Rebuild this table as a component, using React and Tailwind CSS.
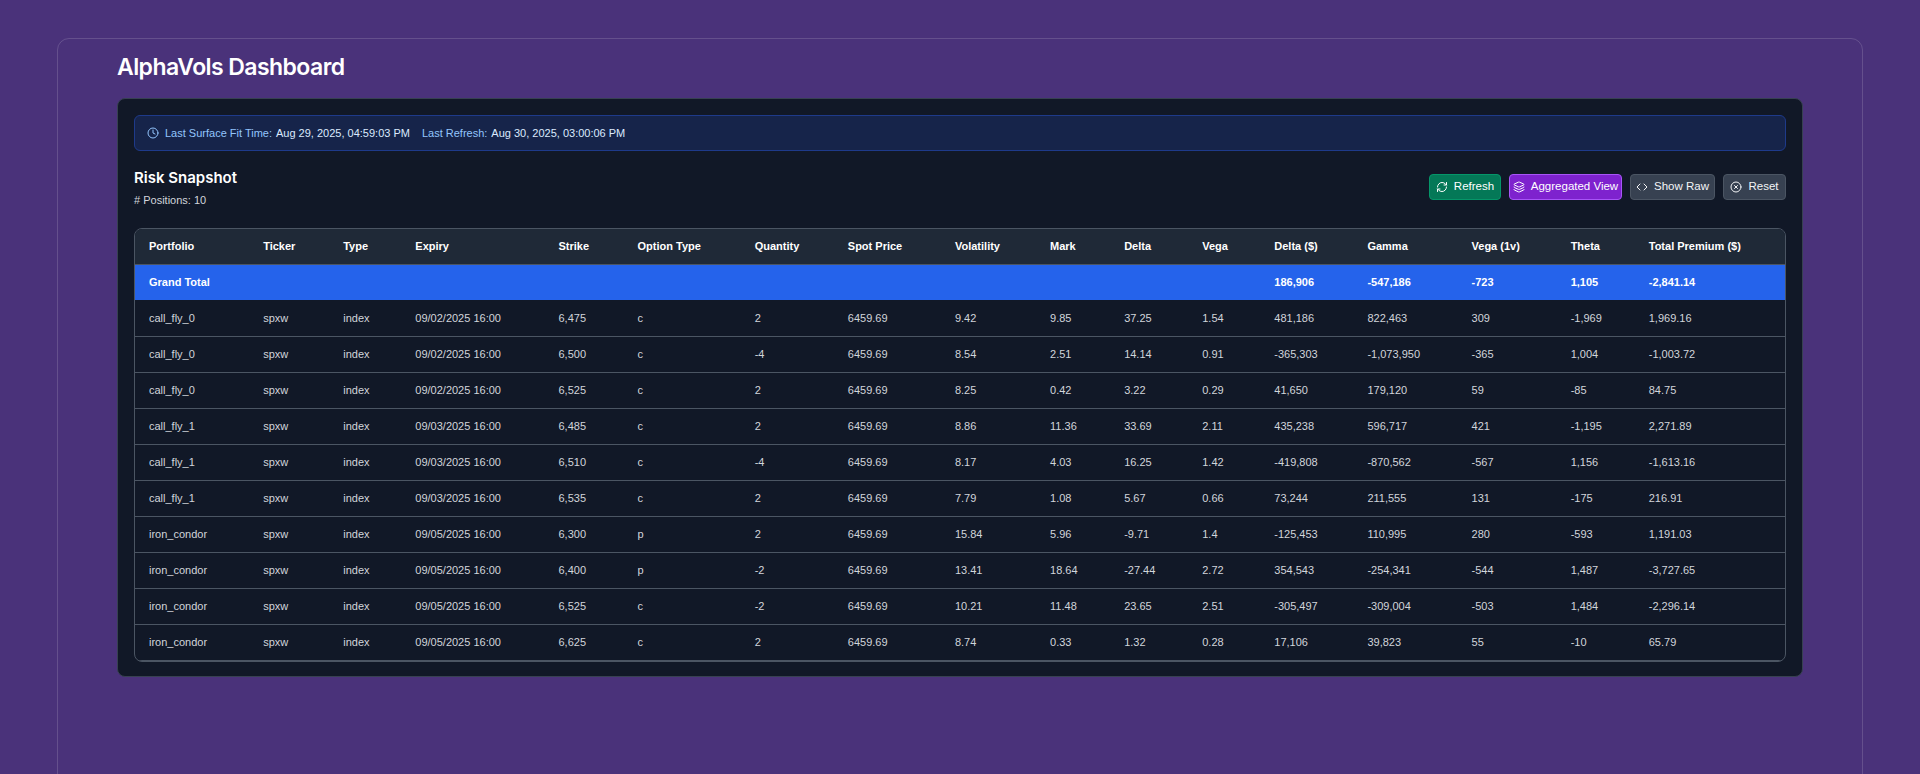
import React from 'react';
import { Clock, RefreshCw, Layers, Code, CircleX } from 'lucide-react';

const columns = [
  { key: 'portfolio', label: 'Portfolio', width: 114 },
  { key: 'ticker', label: 'Ticker', width: 80 },
  { key: 'type', label: 'Type', width: 72 },
  { key: 'expiry', label: 'Expiry', width: 143 },
  { key: 'strike', label: 'Strike', width: 79 },
  { key: 'optionType', label: 'Option Type', width: 117 },
  { key: 'quantity', label: 'Quantity', width: 93 },
  { key: 'spot', label: 'Spot Price', width: 107 },
  { key: 'vol', label: 'Volatility', width: 95 },
  { key: 'mark', label: 'Mark', width: 74 },
  { key: 'delta', label: 'Delta', width: 78 },
  { key: 'vega', label: 'Vega', width: 72 },
  { key: 'deltaUsd', label: 'Delta ($)', width: 93 },
  { key: 'gamma', label: 'Gamma', width: 104 },
  { key: 'vega1v', label: 'Vega (1v)', width: 99 },
  { key: 'theta', label: 'Theta', width: 78 },
  { key: 'premium', label: 'Total Premium ($)', width: 150 },
];

const positions = [
  ['call_fly_0', '09/02/2025 16:00', '6,475', 'c', '2', '9.42', '9.85', '37.25', '1.54', '481,186', '822,463', '309', '-1,969', '1,969.16'],
  ['call_fly_0', '09/02/2025 16:00', '6,500', 'c', '-4', '8.54', '2.51', '14.14', '0.91', '-365,303', '-1,073,950', '-365', '1,004', '-1,003.72'],
  ['call_fly_0', '09/02/2025 16:00', '6,525', 'c', '2', '8.25', '0.42', '3.22', '0.29', '41,650', '179,120', '59', '-85', '84.75'],
  ['call_fly_1', '09/03/2025 16:00', '6,485', 'c', '2', '8.86', '11.36', '33.69', '2.11', '435,238', '596,717', '421', '-1,195', '2,271.89'],
  ['call_fly_1', '09/03/2025 16:00', '6,510', 'c', '-4', '8.17', '4.03', '16.25', '1.42', '-419,808', '-870,562', '-567', '1,156', '-1,613.16'],
  ['call_fly_1', '09/03/2025 16:00', '6,535', 'c', '2', '7.79', '1.08', '5.67', '0.66', '73,244', '211,555', '131', '-175', '216.91'],
  ['iron_condor', '09/05/2025 16:00', '6,300', 'p', '2', '15.84', '5.96', '-9.71', '1.4', '-125,453', '110,995', '280', '-593', '1,191.03'],
  ['iron_condor', '09/05/2025 16:00', '6,400', 'p', '-2', '13.41', '18.64', '-27.44', '2.72', '354,543', '-254,341', '-544', '1,487', '-3,727.65'],
  ['iron_condor', '09/05/2025 16:00', '6,525', 'c', '-2', '10.21', '11.48', '23.65', '2.51', '-305,497', '-309,004', '-503', '1,484', '-2,296.14'],
  ['iron_condor', '09/05/2025 16:00', '6,625', 'c', '2', '8.74', '0.33', '1.32', '0.28', '17,106', '39,823', '55', '-10', '65.79'],
];

const rows = positions.map((p) => ({
  portfolio: p[0],
  ticker: 'spxw',
  type: 'index',
  expiry: p[1],
  strike: p[2],
  optionType: p[3],
  quantity: p[4],
  spot: '6459.69',
  vol: p[5],
  mark: p[6],
  delta: p[7],
  vega: p[8],
  deltaUsd: p[9],
  gamma: p[10],
  vega1v: p[11],
  theta: p[12],
  premium: p[13],
}));

const grandTotal = {
  portfolio: 'Grand Total',
  deltaUsd: '186,906',
  gamma: '-547,186',
  vega1v: '-723',
  theta: '1,105',
  premium: '-2,841.14',
};

const bodyFont = { fontFamily: '"Liberation Sans", Arial, sans-serif' };

const App = () => {
  return (
    <div className="min-h-screen bg-[#4a327a] px-[57px] pt-[38px]" style={bodyFont}>
      <div className="min-h-[760px] rounded-xl border border-white/15 px-[59px] pt-3">
        {/* Header */}
        <h1 className="font-['Inter',sans-serif] text-[23px] font-semibold leading-8 tracking-tight text-white">
          AlphaVols Dashboard
        </h1>

        {/* Main card */}
        <div className="mt-[15px] rounded-lg border border-[#374151] bg-[#111827] px-4 pt-4 pb-[14px]">
          {/* Timestamps banner */}
          <div className="flex h-9 items-center gap-3 rounded-md border border-[#1e3a8a] bg-[#16244a] px-3 text-[11px]">
            <div className="flex items-center gap-1">
              <Clock className="mr-0.5 h-3 w-3 text-[#93c5fd]" />
              <span className="text-[#93c5fd]">Last Surface Fit Time:</span>
              <span className="text-[#dbeafe]">Aug 29, 2025, 04:59:03 PM</span>
            </div>
            <div className="flex items-center gap-1">
              <span className="text-[#93c5fd]">Last Refresh:</span>
              <span className="text-[#dbeafe]">Aug 30, 2025, 03:00:06 PM</span>
            </div>
          </div>

          {/* Section header */}
          <div className="mt-[15px] mb-5 flex items-center justify-between">
            <div>
              <h2 className="font-['Inter',sans-serif] text-[15px] font-semibold leading-6 text-white">Risk Snapshot</h2>
              <p className="mt-0.5 text-[11px] leading-4 text-[#d1d5db]"># Positions: 10</p>
            </div>
            <div className="flex items-center gap-2 text-[11.5px]">
              <button className="flex h-[26px] w-[72px] items-center justify-center gap-1.5 rounded border border-[#059669] bg-[#047857] text-white">
                <RefreshCw className="h-3 w-3" />
                Refresh
              </button>
              <button className="flex h-[26px] w-[113px] items-center justify-center gap-1.5 rounded border border-[#a855f7] bg-[#7e22ce] text-white">
                <Layers className="h-3 w-3" />
                Aggregated View
              </button>
              <button className="flex h-[26px] w-[85px] items-center justify-center gap-1.5 rounded border border-[#4b5563] bg-[#374151] text-[#f3f4f6]">
                <Code className="h-3 w-3" />
                Show Raw
              </button>
              <button className="flex h-[26px] w-[63px] items-center justify-center gap-1.5 rounded border border-[#4b5563] bg-[#374151] text-[#f3f4f6]">
                <CircleX className="h-3 w-3" />
                Reset
              </button>
            </div>
          </div>

          {/* Positions table */}
          <div className="overflow-hidden rounded-lg border border-[#4b5563]">
            <table className="w-full table-fixed text-left text-[11px]">
              <colgroup>
                {columns.map((c) => (
                  <col key={c.key} style={{ width: c.width }} />
                ))}
              </colgroup>
              <thead>
                <tr className="h-[35px] border-b border-[#4b5563] bg-[#1f2937]">
                  {columns.map((c) => (
                    <th key={c.key} className="pl-[14px] font-bold text-white">
                      {c.label}
                    </th>
                  ))}
                </tr>
              </thead>
              <tbody>
                <tr className="h-9 bg-[#2563eb]">
                  {columns.map((c) => (
                    <td key={c.key} className="pl-[14px] font-bold text-white">
                      {grandTotal[c.key] || ''}
                    </td>
                  ))}
                </tr>
                {rows.map((row, i) => (
                  <tr key={i} className="h-9 border-b border-[#4b5563]">
                    {columns.map((c) => (
                      <td key={c.key} className="pl-[14px] text-[#d1d5db]">
                        {row[c.key]}
                      </td>
                    ))}
                  </tr>
                ))}
              </tbody>
            </table>
          </div>
        </div>
      </div>
    </div>
  );
};

export default App;
